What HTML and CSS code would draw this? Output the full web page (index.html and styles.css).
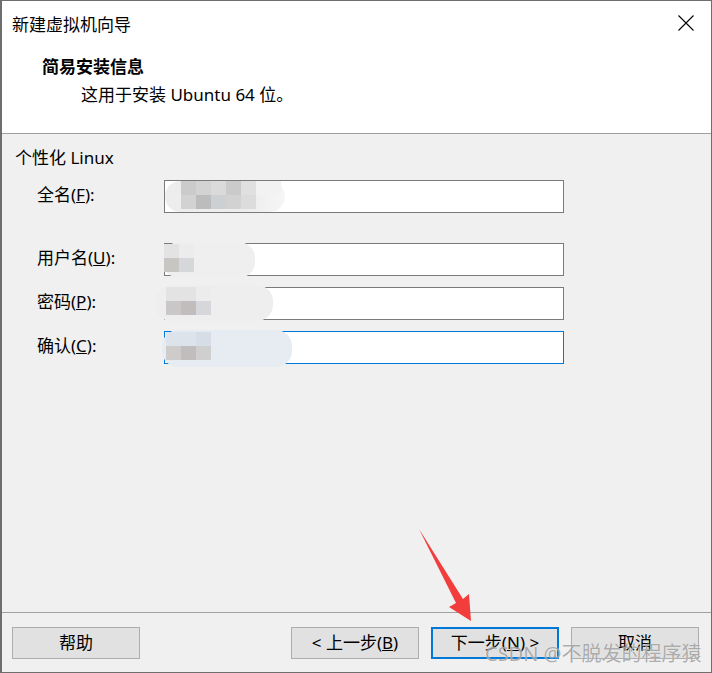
FILE: index.html
```html
<!DOCTYPE html>
<html lang="zh-CN">
<head>
<meta charset="utf-8">
<title>新建虚拟机向导</title>
<link rel="stylesheet" href="styles.css">
</head>
<body>
<div class="window">
  <div class="top">
    <div class="titlebar">
      <span class="title">新建虚拟机向导</span>
      <svg class="close" width="16" height="16" viewBox="0 0 16 16"><path d="M0.5 0.5 L15.5 15.5 M15.5 0.5 L0.5 15.5" stroke="#000" stroke-width="1.1" fill="none"/></svg>
    </div>
    <div class="header">
      <div class="h-title">简易安装信息</div>
      <div class="h-sub">这用于安装 Ubuntu 64 位。</div>
    </div>
  </div>
  <div class="content">
    <div class="group">个性化 Linux</div>
    <div class="form">
      <label class="lbl">全名(<u>F</u>):</label>
      <div class="field">
        <div class="blob b1">
          <div class="row"><i class="c cA"></i><i class="c cB"></i><i class="c cC"></i><i class="c cD"></i><i class="c cE"></i><i class="c cF"></i></div>
          <div class="row"><i class="c cG"></i><i class="c cH"></i><i class="c cI"></i><i class="c cJ"></i><i class="c cK"></i></div>
        </div>
      </div>
      <label class="lbl gap-big">用户名(<u>U</u>):</label>
      <div class="field gap-big">
        <div class="blob b2">
          <div class="row"><i class="c cL"></i><i class="c cM"></i></div>
          <div class="row"><i class="c cN"></i><i class="c cO"></i></div>
        </div>
      </div>
      <label class="lbl">密码(<u>P</u>):</label>
      <div class="field">
        <div class="blob b3">
          <div class="row"><i class="c cL"></i><i class="c cL"></i><i class="c cM"></i></div>
          <div class="row"><i class="c cP"></i><i class="c cQ"></i><i class="c cO"></i></div>
        </div>
      </div>
      <label class="lbl">确认(<u>C</u>):</label>
      <div class="field focus">
        <div class="blob b4">
          <div class="row"><i class="c cR"></i><i class="c cR"></i><i class="c cS"></i></div>
          <div class="row"><i class="c cT"></i><i class="c cQ"></i><i class="c cU"></i></div>
        </div>
      </div>
    </div>
  </div>
  <div class="footer">
    <button class="btn">帮助</button>
    <div class="spacer"></div>
    <button class="btn">&lt; 上一步(<u>B</u>)</button>
    <button class="btn default">下一步(<u>N</u>) &gt;</button>
    <button class="btn">取消</button>
  </div>
  <svg class="arrow" width="712" height="673" viewBox="0 0 712 673"><polygon points="419,529 463,599 469,594 471,621 449,607 456,603" fill="#f23d3d"/></svg>
  <div class="watermark">CSDN @不脱发的程序猿</div>
</div>
</body>
</html>
```

FILE: styles.css
```css
* { box-sizing: border-box; }
html, body { margin: 0; padding: 0; background: #fff; }
body {
  font-family: "Noto Sans", "Noto Sans CJK SC", sans-serif;
  color: #000;
}
.window {
  position: relative;
  width: 712px;
  height: 673px;
  border: 1px solid #6e6e6e;
  border-left-width: 2px;
  display: flex;
  flex-direction: column;
  background: #f0f0f0;
  overflow: hidden;
}
.top {
  height: 133px;
  background: #fff;
  border-bottom: 1px solid #a0a0a0;
  flex: none;
}
.titlebar {
  height: 44px;
  display: flex;
  align-items: center;
  justify-content: space-between;
  padding: 0 17px 0 10px;
}
.title { font-size: 17px; }
.header { padding: 8px 0 0 40px; }
.h-title { font-size: 17px; font-weight: bold; line-height: 26px; font-family: "Noto Sans CJK SC", sans-serif; }
.h-sub { font-size: 17px; line-height: 26px; padding-left: 39px; margin-top: 3px; }
.content {
  flex: 1;
  padding: 12px 0 0 13px;
  border-bottom: 1px solid #a0a0a0;
}
.group { font-size: 17px; line-height: 24px; }
.form {
  display: grid;
  grid-template-columns: 127px 400px;
  row-gap: 11px;
  margin-top: 10px;
  padding-left: 22px;
  align-items: center;
}
.lbl { font-size: 17px; line-height: 30px; align-self: start; }
.gap-big { margin-top: 19px; }
.field {
  position: relative;
  height: 33px;
  background: #fff;
  border: 1px solid #7a7a7a;
}
.field.focus { border-color: #0078d7; }
.blob {
  position: absolute;
  display: flex;
  flex-direction: column;
  border-radius: 16px;
  padding-left: 1px;
}
.b1 { left: 0; top: 0; width: 120px; height: 31px; background: linear-gradient(90deg, #ededed 70%, #f6f6f6); }
.b2 { left: -2px; top: -2px; width: 92px; height: 36px; background: #efefef; padding-top: 2px; }
.b3 { left: -10px; top: -3px; width: 118px; height: 36px; background: #eeeeee; padding: 2px 0 0 11px; }
.b4 { left: -3px; top: -2px; width: 130px; height: 37px; background: #e6ecf2; padding: 2px 0 0 4px; }
.row { display: flex; height: 14px; }
.c { display: block; width: 15px; height: 14px; }
.cA { background: #cbcbcb; margin-left: 15px; }
.cB { background: #d3d3d3; }
.cC { background: #dadada; }
.cD { background: #cacaca; }
.cE { background: #e0e0e0; }
.cF { background: #f2f2f2; width: 25px; }
.cG { background: #d2d2d2; margin-left: 15px; }
.cH { background: #bcbcbc; }
.cI { background: #cdd0d3; }
.cJ { background: #d2d2d2; }
.cK { background: #dcdcdc; }
.cL { background: #e3e3e3; }
.cM { background: #ececec; }
.cN { background: #c8c6c3; }
.cO { background: #d6d7da; }
.cP { background: #c9c7c7; }
.cQ { background: #c1bdbc; }
.cR { background: #dde3ea; }
.cS { background: #d6dde6; }
.cT { background: #cdcccb; }
.cU { background: #cfcfcf; }
.footer {
  height: 59px;
  flex: none;
  display: flex;
  align-items: flex-start;
  padding: 14px 12px 0 10px;
  gap: 12px;
}
.spacer { flex: 1; }
.btn {
  width: 128px;
  height: 32px;
  background: #e1e1e1;
  border: 1px solid #adadad;
  font-family: "Noto Sans", "Noto Sans CJK SC", sans-serif;
  font-size: 17px;
  color: #000;
  padding: 0;
  line-height: 28px;
}
.btn.default { border: 2px solid #0078d7; }
.arrow { position: absolute; left: -2px; top: -1px; pointer-events: none; }
.watermark {
  position: absolute;
  left: 483px;
  top: 641px;
  font-family: "Noto Sans", "Noto Sans CJK SC", sans-serif;
  font-size: 20px;
  line-height: 24px;
  color: rgba(120, 120, 120, 0.6);
  text-shadow: 0 0 1px rgba(255,255,255,0.8);
  white-space: nowrap;
}
```
